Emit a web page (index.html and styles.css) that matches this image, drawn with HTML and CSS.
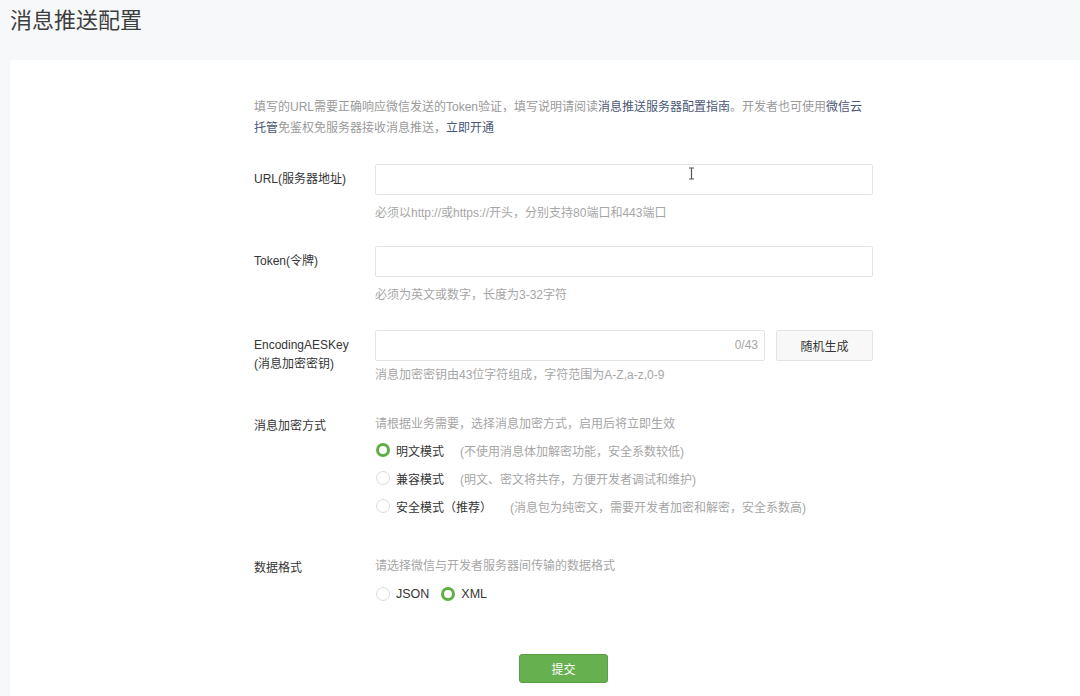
FILE: index.html
```html
<!DOCTYPE html>
<html lang="zh-CN">
<head>
<meta charset="utf-8">
<title>消息推送配置</title>
<link rel="stylesheet" href="styles.css">
</head>
<body>
<header class="page-head">
  <h1 class="page-title">消息推送配置</h1>
</header>
<main class="card">
  <p class="intro">填写的URL需要正确响应微信发送的Token验证，填写说明请阅读<a class="link">消息推送服务器配置指南</a>。开发者也可使用<a class="link">微信云<br>托管</a>免鉴权免服务器接收消息推送，<a class="link">立即开通</a></p>

  <div class="field field-url">
    <label class="label">URL(服务器地址)</label>
    <div class="control">
      <div class="input-wrap">
        <input class="input" type="text">
        <svg class="cursor" width="7" height="13" viewBox="0 0 7 13"><path d="M1 1h2l.5.5.5-.5h2M3.5 1.5v10M1 12h2l.5-.5.5.5h2" fill="none" stroke="#555" stroke-width="1.2"/></svg>
      </div>
      <p class="hint hint-url">必须以http://或https://开头，分别支持80端口和443端口</p>
    </div>
  </div>

  <div class="field field-token">
    <label class="label">Token(令牌)</label>
    <div class="control">
      <input class="input" type="text">
      <p class="hint hint-token">必须为英文或数字，长度为3-32字符</p>
    </div>
  </div>

  <div class="field field-aes">
    <label class="label label-two">EncodingAESKey<br>(消息加密密钥)</label>
    <div class="control">
      <div class="aes-row">
        <div class="input-wrap aes-input">
          <input class="input" type="text">
          <span class="counter">0/43</span>
        </div>
        <button class="btn-gen" type="button">随机生成</button>
      </div>
      <p class="hint hint-aes">消息加密密钥由43位字符组成，字符范围为A-Z,a-z,0-9</p>
    </div>
  </div>

  <div class="field field-mode">
    <label class="label">消息加密方式</label>
    <div class="control">
      <p class="hint hint-top">请根据业务需要，选择消息加密方式，启用后将立即生效</p>
      <ul class="radio-list">
        <li class="radio-item"><span class="radio checked"></span><span class="radio-text">明文模式</span><span class="radio-desc">(不使用消息体加解密功能，安全系数较低)</span></li>
        <li class="radio-item"><span class="radio"></span><span class="radio-text">兼容模式</span><span class="radio-desc">(明文、密文将共存，方便开发者调试和维护)</span></li>
        <li class="radio-item"><span class="radio"></span><span class="radio-text">安全模式（推荐）</span><span class="radio-desc desc-wide">(消息包为纯密文，需要开发者加密和解密，安全系数高)</span></li>
      </ul>
    </div>
  </div>

  <div class="field field-format">
    <label class="label">数据格式</label>
    <div class="control">
      <p class="hint hint-top">请选择微信与开发者服务器间传输的数据格式</p>
      <div class="radio-inline">
        <span class="radio"></span><span class="radio-text fmt fmt-json">JSON</span>
        <span class="radio checked"></span><span class="radio-text fmt">XML</span>
      </div>
    </div>
  </div>

  <div class="actions">
    <button class="btn-submit" type="button">提交</button>
  </div>
</main>
</body>
</html>
```
FILE: styles.css
```css
* { box-sizing: border-box; }
html, body { margin: 0; padding: 0; }
body {
  background: #f7f8fa;
  font-family: "Liberation Sans", "Noto Sans CJK SC", sans-serif;
  font-size: 12px;
  color: #353535;
  height: 696px;
  overflow: hidden;
}
.page-head { height: 60px; padding: 5px 0 0 10px; }
.page-title {
  margin: 0;
  font-size: 22px;
  font-weight: normal;
  color: #3e3e3e;
  line-height: 32px;
}
.card {
  background: #fff;
  margin-left: 10px;
  height: 636px;
  padding: 37px 0 0 244px;
}
.intro {
  margin: 0;
  width: 625px;
  line-height: 21px;
  color: #9a9a9a;
}
.link { color: #4b5777; }
.field { display: flex; }
.label {
  width: 121px;
  flex: none;
  color: #353535;
  line-height: 18px;
}
.control { width: 498px; }
.input-wrap { position: relative; }
.input {
  display: block;
  width: 498px;
  height: 31px;
  border: 1px solid #e4e4e8;
  border-radius: 2px;
  background: #fff;
  margin: 0;
  outline: none;
}
.cursor { position: absolute; left: 313px; top: 3px; }
.hint { margin: 0; color: #a6a6a6; line-height: 18px; }
.field-url { margin-top: 25px; }
.field-url .label { padding-top: 6px; }
.hint-url { margin-top: 9px; }
.field-token { margin-top: 24px; }
.field-token .label { padding-top: 6px; }
.hint-token { margin-top: 9px; }
.field-aes { margin-top: 26px; }
.label-two { padding-top: 6px; line-height: 19px; }
.aes-row { display: flex; gap: 11px; }
.aes-input .input { width: 390px; }
.counter {
  position: absolute;
  right: 7px;
  top: 8px;
  color: #a6a6a6;
  line-height: 15px;
}
.btn-gen {
  width: 97px;
  height: 31px;
  border: 1px solid #e4e4e8;
  border-radius: 2px;
  background: #f8f8f8;
  font: inherit;
  color: #353535;
  padding: 0;
}
.hint-aes { margin-top: 5px; }
.field-mode { margin-top: 31px; }
.field-mode .label { padding-top: 2px; }
.hint-top { line-height: 18px; }
.radio-list { list-style: none; margin: 3px 0 0; padding: 0; }
.radio-item {
  display: flex;
  align-items: center;
  height: 28px;
}
.radio {
  width: 14px;
  height: 14px;
  border: 1px solid #dcdcdc;
  border-radius: 50%;
  flex: none;
  display: inline-block;
  margin-left: 1px;
}
.radio.checked { border: 3px solid #5fae45; }
.radio-text { margin-left: 6px; color: #353535; }
.radio-desc { margin-left: 16px; color: #a6a6a6; }
.desc-wide { margin-left: 18px; }
.field-format { margin-top: 37px; }
.field-format .label { padding-top: 2px; }
.radio-inline {
  display: flex;
  align-items: center;
  height: 28px;
  margin-top: 5px;
}
.fmt { font-size: 12.5px; }
.fmt-json { margin-right: 11px; }
.actions { margin-top: 46px; padding-left: 265px; }
.btn-submit {
  width: 89px;
  height: 29px;
  border: 1px solid #5a9f45;
  border-radius: 3px;
  background: #67b04f;
  color: #fff;
  font: inherit;
  padding: 0;
}
```
